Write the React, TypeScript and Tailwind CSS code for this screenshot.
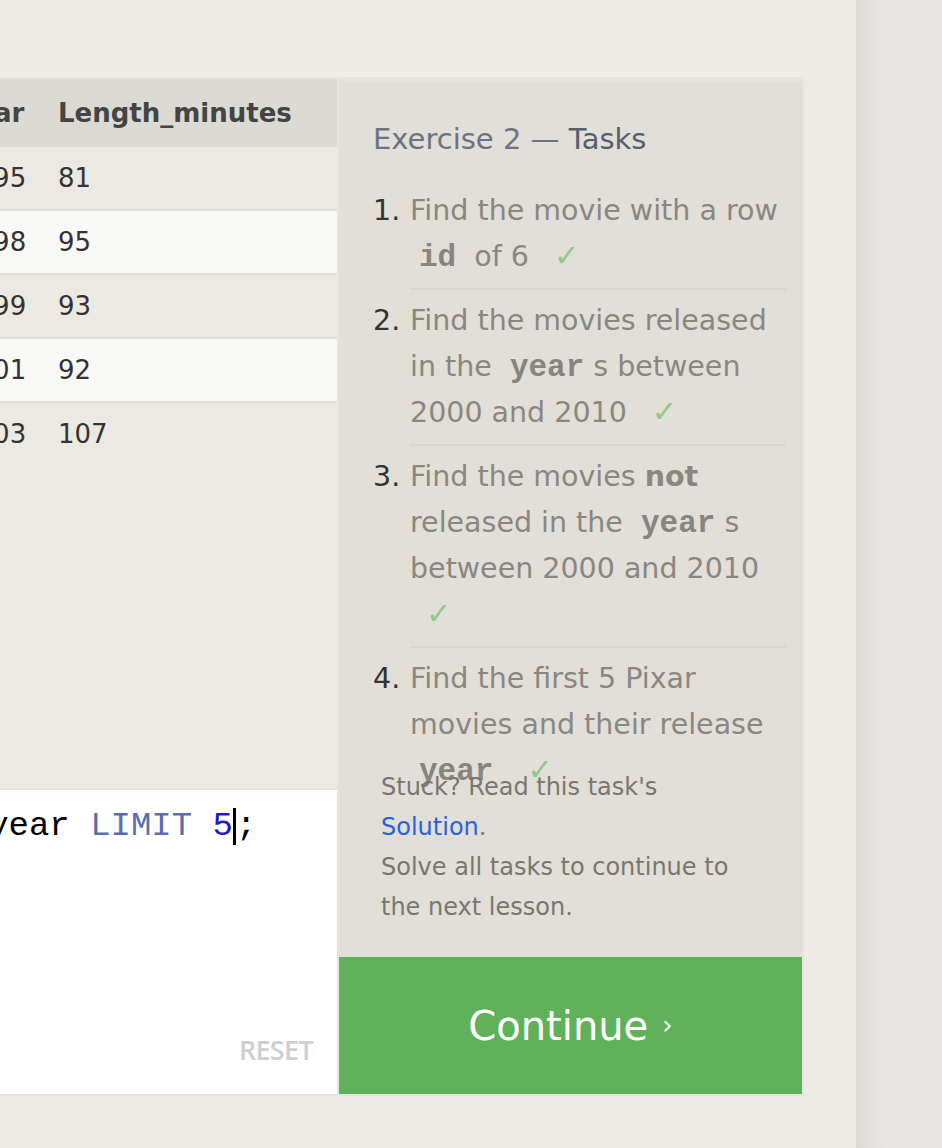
const movies = [
  { id: 1, title: "Toy Story", director: "John Lasseter", year: 1995, length: 81 },
  { id: 2, title: "A Bug's Life", director: "John Lasseter", year: 1998, length: 95 },
  { id: 3, title: "Toy Story 2", director: "John Lasseter", year: 1999, length: 93 },
  { id: 4, title: "Monsters, Inc.", director: "Pete Docter", year: 2001, length: 92 },
  { id: 5, title: "Finding Nemo", director: "Andrew Stanton", year: 2003, length: 107 },
];

const Check = () => (
  <span className="inline-block ml-4 leading-none text-[#8ec98a] text-[30px]">✓</span>
);

const Code = ({ children }: { children: React.ReactNode }) => (
  <code className="font-['Liberation_Mono',monospace] font-bold leading-none text-[31px] px-[9px] text-[#878580]">
    {children}
  </code>
);

const tasks: React.ReactNode[] = [
  <>Find the movie with a row <Code>id</Code> of 6 <Check /></>,
  <>Find the movies released in the <Code>year</Code>s between 2000 and 2010 <Check /></>,
  <>Find the movies <b className="font-bold">not</b> released in the <Code>year</Code>s between 2000 and 2010 <Check /></>,
  <>Find the first 5 Pixar movies and their release <Code>year</Code> <Check /></>,
];

const App = () => {
  return (
    <div className="min-h-screen flex bg-[#efece5] font-['DejaVu_Sans',sans-serif]">
      <div className="w-[856px] pt-[77px] pb-[52px]">
        <div className="w-[804px] flex bg-[#e6e4dd] border-t-2 border-r-2 border-b-2 border-[#e6e4dd]">
          {/* left: results table + editor */}
          <div className="w-[337px] flex flex-col">
            <div className="h-[709px] bg-[#ebe9e2] flex justify-end overflow-hidden">
              <div className="shrink-0 flex flex-col">
                <div className="flex h-[68px] items-center bg-[#dbdad3] text-[#444] font-bold text-[26px]">
                  <div className="w-[70px] px-4">Id</div>
                  <div className="w-[260px] px-4">Title</div>
                  <div className="w-[270px] px-4">Director</div>
                  <div className="w-[98px] px-4">Year</div>
                  <div className="w-[295px] px-4">Length_minutes</div>
                </div>
                {movies.map((m, i) => (
                  <div
                    key={m.id}
                    className={
                      "flex items-center text-[26px] text-[#333] " +
                      (i === movies.length - 1
                        ? "h-[62px] bg-[#ebe9e2]"
                        : "h-[64px] border-b-2 border-[#e0dfd9] " + (i % 2 === 0 ? "bg-[#ebe9e2]" : "bg-[#f8f8f7]"))
                    }
                  >
                    <div className="w-[70px] px-4">{m.id}</div>
                    <div className="w-[260px] px-4 whitespace-nowrap">{m.title}</div>
                    <div className="w-[270px] px-4 whitespace-nowrap">{m.director}</div>
                    <div className="w-[98px] px-4">{m.year}</div>
                    <div className="w-[295px] px-4">{m.length}</div>
                  </div>
                ))}
              </div>
            </div>
            <div className="h-[2px] bg-[#e4e2dc]" />
            <div className="flex-1 bg-white relative overflow-hidden pt-[16px]">
              <div className="ml-[-828px] whitespace-pre font-['Liberation_Mono',monospace] text-[34px] leading-[40px] text-black flex items-center">
                <span>SELECT title, year FROM movies ORDER BY year </span>
                <span className="text-[#5a6eab]">LIMIT</span>
                <span> </span>
                <span className="text-[#1c1cc6]">5</span>
                <span className="inline-block w-[3px] h-[37px] bg-black" />
                <span>;</span>
              </div>
              <button className="absolute right-[24px] bottom-[24px] font-['Open_Sans',sans-serif] text-[27px] font-semibold tracking-tight text-[#cfcfcf]">
                RESET
              </button>
            </div>
          </div>

          <div className="w-[2px]" />

          {/* right: tasks */}
          <div className="w-[463px] mt-[2px] flex flex-col bg-[#e1dfd7]">
            <div className="h-[686px] pl-[34px] pr-[16px] pt-[40px]">
              <h2 className="text-[29px] leading-[36px] text-[#6b7385]">
                Exercise 2 — <span className="text-[#566072]">Tasks</span>
              </h2>
              <ol className="mt-[23px]">
                {tasks.map((t, i) => (
                  <li key={i} className="flex text-[28.5px] leading-[46px]">
                    <span className="w-[37px] shrink-0 pt-[8px] text-[#333]">{i + 1}.</span>
                    <div
                      className={
                        "flex-1 pt-[8px] pb-[8px] text-[#8a8780] " +
                        (i < tasks.length - 1 ? "border-b-2 border-[#d8d6ce]" : "")
                      }
                    >
                      {t}
                    </div>
                  </li>
                ))}
              </ol>
            </div>
            <div className="pl-[42px] pr-[30px] pb-[30px] text-[24px] leading-[40px] text-[#7a7770]">
              <div>Stuck? Read this task's</div>
              <div>
                <a className="text-[#2d62d8]">Solution</a>.
              </div>
              <div>Solve all tasks to continue to the next lesson.</div>
            </div>
            <button className="h-[137px] bg-[#60b25a] flex items-center justify-center text-white text-[40px]">
              Continue<span className="ml-[14px] text-[26px]">›</span>
            </button>
          </div>
        </div>
      </div>
      <div className="flex-1 bg-[linear-gradient(to_right,#dcd9d6,#e9e6e3_28px)]" />
    </div>
  );
};

export default App;
